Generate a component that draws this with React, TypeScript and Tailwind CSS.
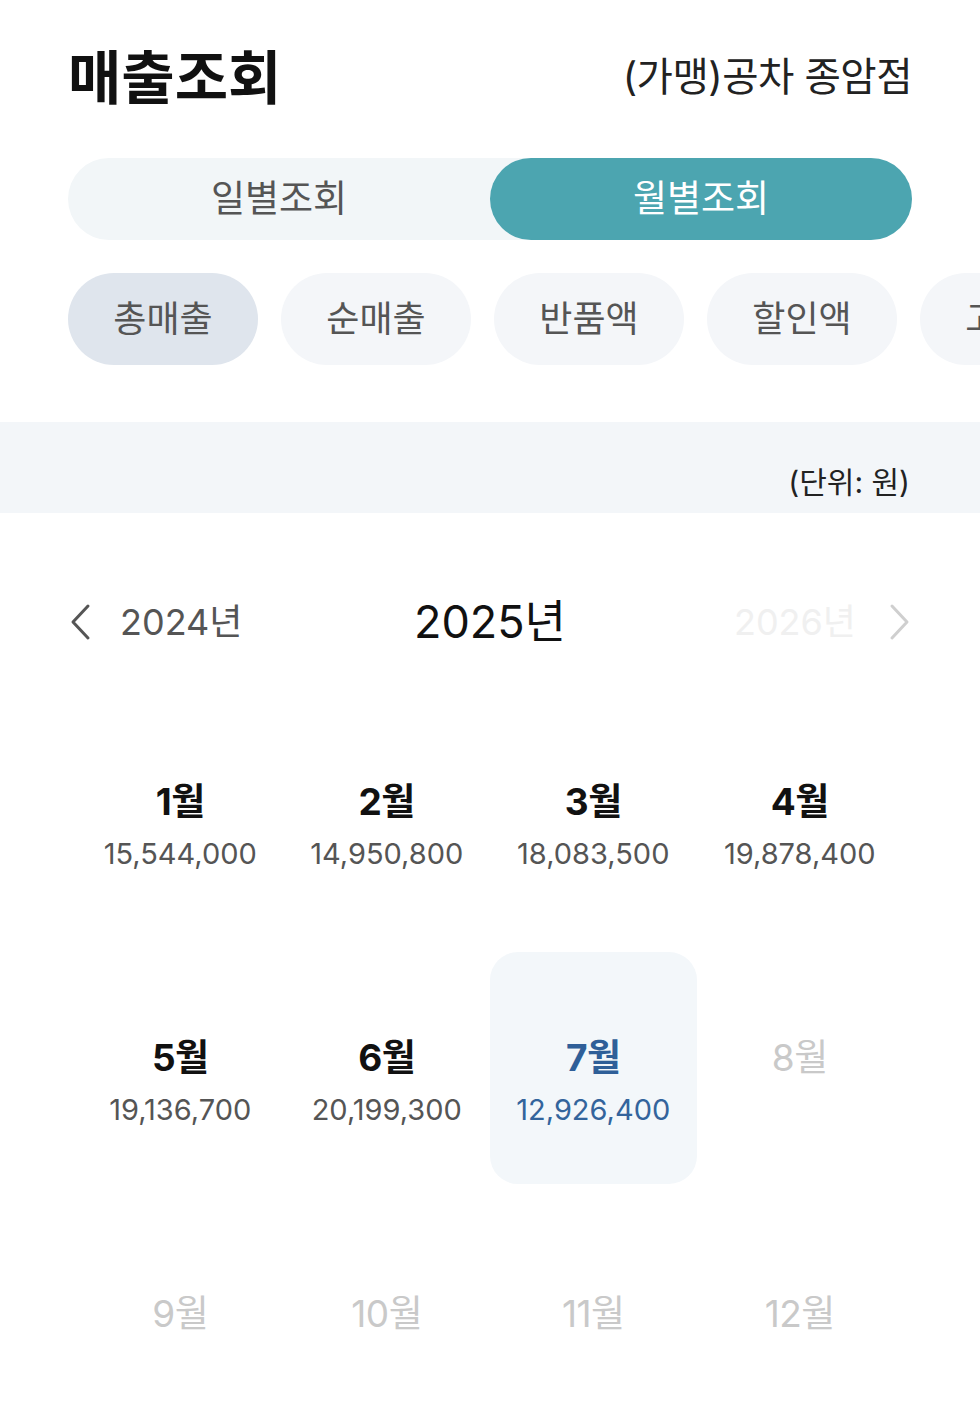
import { useState } from "react";

const months = [
  { m: "1월", amt: "15,544,000" },
  { m: "2월", amt: "14,950,800" },
  { m: "3월", amt: "18,083,500" },
  { m: "4월", amt: "19,878,400" },
  { m: "5월", amt: "19,136,700" },
  { m: "6월", amt: "20,199,300" },
  { m: "7월", amt: "12,926,400" },
  { m: "8월", amt: "" },
  { m: "9월", amt: "" },
  { m: "10월", amt: "" },
  { m: "11월", amt: "" },
  { m: "12월", amt: "" },
];

const chips = ["총매출", "순매출", "반품액", "할인액", "고객수"];

export default function App() {
  const [mode, setMode] = useState<"day" | "month">("month");
  const [chip, setChip] = useState(0);
  const selected = 6;

  return (
    <main
      className="w-[980px] min-h-[1424px] bg-white overflow-hidden text-[#111]"
      style={{ fontFamily: 'Inter, "Noto Sans CJK KR", sans-serif' }}
    >
      {/* Header */}
      <div className="px-[68px] pt-[38px] flex items-center justify-between h-[118px]">
        <h1 className="text-[58px] font-bold leading-none">매출조회</h1>
        <span className="text-[39.5px] leading-none text-[#222] tracking-[-0.5px]">(가맹)공차 종암점</span>
      </div>

      {/* Segmented */}
      <div className="mx-[68px] mt-[40px] h-[82px] rounded-full bg-[#f2f6f8] flex">
        <button
          onClick={() => setMode("day")}
          className={`flex-1 rounded-full text-[37px] ${mode === "day" ? "bg-[#4ca5b0] text-white" : "text-[#555]"}`}
        >
          일별조회
        </button>
        <button
          onClick={() => setMode("month")}
          className={`flex-1 rounded-full text-[37px] ${mode === "month" ? "bg-[#4ca5b0] text-white" : "text-[#555]"}`}
        >
          월별조회
        </button>
      </div>

      {/* Chips */}
      <div className="pl-[68px] mt-[33px] flex gap-[23px] whitespace-nowrap">
        {chips.map((c, i) => (
          <button
            key={c}
            onClick={() => setChip(i)}
            className={`shrink-0 w-[190px] h-[92px] rounded-[46px] text-[36px] text-[#555] ${
              chip === i ? "bg-[#dfe5ed]" : "bg-[#f4f6f9]"
            }`}
          >
            {c}
          </button>
        ))}
      </div>

      {/* Unit band */}
      <div className="mt-[57px] h-[91px] bg-[#f3f6f9] flex items-end justify-end px-[70px] pb-[12px]">
        <span className="text-[30px] leading-[38px] text-[#222]">(단위: 원)</span>
      </div>

      {/* Year nav */}
      <div className="mt-[79px] h-[60px] px-[68px] flex items-center">
        <div className="flex items-center gap-[26px] w-[280px]">
          <svg width="26" height="38" viewBox="0 0 26 38" fill="none">
            <path d="M20 3 L5 19 L20 35" stroke="#555" strokeWidth="3" strokeLinecap="round" strokeLinejoin="round" />
          </svg>
          <span className="text-[36px] text-[#555]">2024년</span>
        </div>
        <div className="flex-1 text-center text-[45px] text-[#111]">2025년</div>
        <div className="flex items-center justify-end gap-[30px] w-[280px]">
          <span className="text-[36px] text-[#f0f0f0]">2026년</span>
          <svg width="26" height="38" viewBox="0 0 26 38" fill="none">
            <path d="M6 3 L21 19 L6 35" stroke="#cfcfcf" strokeWidth="3" strokeLinecap="round" strokeLinejoin="round" />
          </svg>
        </div>
      </div>

      {/* Months */}
      <div className="mt-[44px] mx-[77px] grid grid-cols-4 auto-rows-[232px] gap-y-[24px]">
        {months.map((x, i) => {
          const future = i > selected;
          const active = i === selected;
          return (
            <div
              key={x.m}
              className={`flex flex-col items-center pt-[83px] rounded-[28px] ${active ? "bg-[#f3f7fa]" : ""}`}
            >
              <span
                className={`text-[37px] leading-[46px] tracking-[-0.5px] ${
                  future ? "text-[#c9c9c9]" : "font-bold"
                } ${active ? "text-[#2f5f98]" : future ? "" : "text-[#111]"}`}
              >
                {x.m}
              </span>
              {x.amt && (
                <span
                  className={`mt-[11px] text-[29px] leading-[36px] ${active ? "text-[#33649c]" : "text-[#555]"}`}
                >
                  {x.amt}
                </span>
              )}
            </div>
          );
        })}
      </div>
    </main>
  );
}
